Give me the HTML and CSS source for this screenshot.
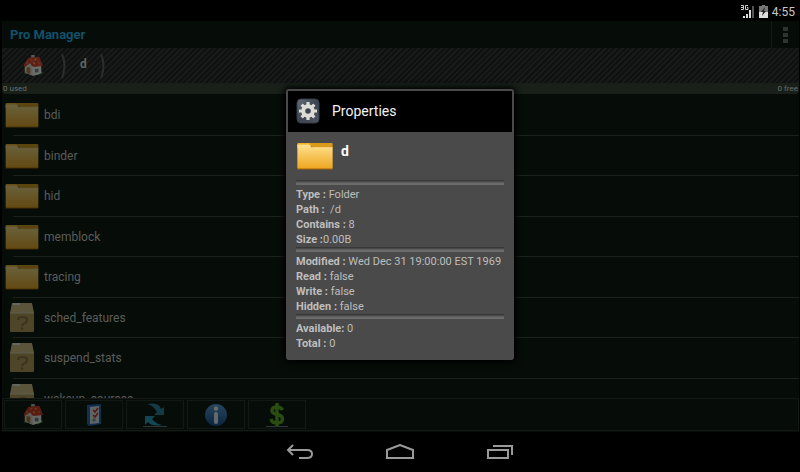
FILE: index.html
```
<!DOCTYPE html>
<html lang="en">

<head>
    <title>Pro Manager</title>
    <meta name="viewport" content="width=device-width, initial-scale=1" charset="UTF-8">
    <link rel="stylesheet" href="styles.css">
</head>

<body>
    <!-- shared icons -->
    <svg class="defs" width="0" height="0" aria-hidden="true">
        <defs>
            <linearGradient id="gold" x1="0" y1="0" x2="0" y2="1">
                <stop offset="0" stop-color="#ffe08a" />
                <stop offset="1" stop-color="#eda51f" />
            </linearGradient>
            <linearGradient id="blue" x1="0" y1="0" x2="0" y2="1">
                <stop offset="0" stop-color="#5b9cdc" />
                <stop offset="1" stop-color="#164a98" />
            </linearGradient>
            <linearGradient id="steel" x1="0" y1="0" x2="1" y2="1">
                <stop offset="0" stop-color="#66707c" />
                <stop offset="0.5" stop-color="#3b444f" />
                <stop offset="1" stop-color="#4d5662" />
            </linearGradient>
        </defs>
        <symbol id="folder" viewBox="0 0 36 27">
            <path d="M1 2q0-1 1-1h11l3 3h-3l2 2H1z" fill="#f2b42c" />
            <path d="M13 1h21q1 0 1 1v4H16z" fill="#d99a1c" />
            <path d="M1 3h11l3 2.500h20V25q0 1-1 1H2q-1 0-1-1z" fill="url(#gold)" />
            <path d="M1 3h11l3 2.500h20" fill="none" stroke="#ffe9a8" stroke-width="0.700" />
            <path d="M1 26h34" stroke="#a8640a" stroke-width="1" />
        </symbol>
        <symbol id="box" viewBox="0 0 28 32">
            <path d="M4 1h20l2 10H2z" fill="#d8c088" />
            <path d="M2 11h24v18q0 1-1 1H3q-1 0-1-1z" fill="#b99a5c" />
            <path d="M2 11h24" stroke="#e6d3a4" stroke-width="1" />
            <path d="M5 1h7v2H4.500z" fill="#efefef" />
            <path d="M10 18q0-3 4.500-3t4.500 3q0 2.500-3 3.500q-2 .8-2 2.500M14 25.500v2.500" fill="none" stroke="#8a7246" stroke-width="2.200" />
        </symbol>
        <symbol id="house" viewBox="0 0 24 26">
            <path d="M1 21l6-2 13-1 3 2-5 3z" fill="#3b9a35" />
            <path d="M10 1h4v6h-4z" fill="#b8bcc0" />
            <path d="M3 12l5-4 4 6v10l-9-4z" fill="#d9d4ca" />
            <path d="M11 13h10v8l-9 3z" fill="#f6f4ef" />
            <path d="M7 4l12-1 4 10-11 1-3-4-6 4-1-2z" fill="#d3331f" />
            <path d="M9 6h2v1H9zM14 5h2v2h-2zM12 9h2v2h-2zM18 9h1v2h-1zM5 9h1v2H5z" fill="#f0a13a" />
            <path d="M5 14l4 1v7l-4-2z" fill="#b56b28" />
            <path d="M14 16h4v4h-4z" fill="#6f7d8c" />
        </symbol>
    </svg>

    <header class="status">
        <svg width="14" height="14" viewBox="0 0 14 14" aria-hidden="true">
            <path d="M0 .5h2.500v4H0M0 2.500h2.500M7 .5H4.500v4H7V2.500H6" fill="none" stroke="#ccc" />
            <path d="M2 13v-2h2v2zM5 13V9h2v4zM8 13V5h2v8z" fill="#ddd" />
            <path d="M11 13V1h2v12z" fill="#555" />
        </svg>
        <svg width="9" height="13" viewBox="0 0 9 13" aria-hidden="true">
            <path d="M3 0h3v1h3v12H0V1h3z" fill="#777" />
            <path d="M0 7h9v6H0z" fill="#ddd" />
            <path d="M6 2L2 7h2l-1 4 4-5H5z" fill="#222" />
        </svg>
        <span>4:55</span>
    </header>

    <main class="app">
        <div class="titlebar">
            <h1>Pro Manager</h1>
            <button class="menu" type="button" aria-label="More options"><i></i><i></i><i></i></button>
        </div>

        <nav class="path">
            <a class="path-home" href="#" aria-label="Home"><svg class="dim" width="22" height="24"><use href="#house" /></svg></a>
            <svg class="chevron" width="8" height="26" viewBox="0 0 8 26"><path d="M2 1q5 12 0 24" /></svg>
            <a class="path-dir" href="#">d</a>
            <svg class="chevron" width="8" height="26" viewBox="0 0 8 26"><path d="M2 1q5 12 0 24" /></svg>
        </nav>

        <div class="usage"><span>0 used</span><span>0 free</span></div>

        <ul class="files">
            <li><a href="#"><svg class="dim" width="36" height="26"><use href="#folder" /></svg>bdi</a></li>
            <li><a href="#"><svg class="dim" width="36" height="26"><use href="#folder" /></svg>binder</a></li>
            <li><a href="#"><svg class="dim" width="36" height="26"><use href="#folder" /></svg>hid</a></li>
            <li><a href="#"><svg class="dim" width="36" height="26"><use href="#folder" /></svg>memblock</a></li>
            <li><a href="#"><svg class="dim" width="36" height="26"><use href="#folder" /></svg>tracing</a></li>
            <li><a href="#"><svg class="dim" width="36" height="32"><use href="#box" /></svg>sched_features</a></li>
            <li><a href="#"><svg class="dim" width="36" height="32"><use href="#box" /></svg>suspend_stats</a></li>
            <li><a href="#"><svg class="dim" width="36" height="32"><use href="#box" /></svg>wakeup_sources</a></li>
        </ul>

        <div class="toolbar">
            <button type="button" aria-label="Home"><svg class="dim" width="22" height="24"><use href="#house" /></svg></button>
            <button type="button" aria-label="Select">
                <svg class="dim" width="24" height="24" viewBox="0 0 24 24">
                    <path d="M5 2l13-1q1 0 1 1v19l-12 2-2-2z" fill="#1f67b8" />
                    <path d="M8 4l9-1v17l-9 1z" fill="#e4ebf2" />
                    <path d="M11 7l2 2 3-4M11 12l2 2 3-4" fill="none" stroke="#d02c20" stroke-width="1.600" />
                    <path d="M11 16h2v2h-2z" fill="none" stroke="#6a7f96" />
                </svg>
            </button>
            <button type="button" aria-label="Refresh">
                <svg class="dim" width="26" height="26" viewBox="0 0 26 26">
                    <path d="M5 2Q17 0 19 7l3-2v8H12l3-3Q12 4 5 2z" fill="#2b7fa8" />
                    <path d="M3 14h10l-3 3q4 5 10 6-10 2-14-3l-3 3z" fill="#2b9fc8" />
                    <path d="M1 24.500h24" stroke="#70797c" />
                </svg>
            </button>
            <button type="button" aria-label="Info">
                <svg class="dim" width="24" height="24" viewBox="0 0 24 24">
                    <circle cx="12" cy="12" r="11" fill="url(#blue)" />
                    <path d="M12 11v8" stroke="#f2f6fa" stroke-width="4" stroke-linecap="round" />
                    <circle cx="12" cy="5.500" r="2.200" fill="#f2f6fa" />
                </svg>
            </button>
            <button type="button" aria-label="Donate">
                <svg class="dim" width="24" height="26" viewBox="0 0 24 26">
                    <path d="M1 24.500h22" stroke="#70797c" />
                    <path d="M17.500 8Q16 5 12 5q-5 0-5 3.500 0 3 5 4 5.500 1 5.500 4.500 0 4-5.500 4-5 0-6-4M12 1v23" fill="none" stroke="#5fae1c" stroke-width="3.400" />
                </svg>
            </button>
        </div>
    </main>

    <footer class="keys">
        <button type="button" aria-label="Back">
            <svg width="28" height="16" viewBox="0 0 28 16"><path d="M7 1L2 6l5 5M2 6h19q5 0 5 4t-5 4h-8" /></svg>
        </button>
        <button type="button" aria-label="Home">
            <svg width="28" height="16" viewBox="0 0 28 16"><path d="M1 14V6l13-5 13 5v8z" /></svg>
        </button>
        <button type="button" aria-label="Recent apps">
            <svg width="28" height="16" viewBox="0 0 28 16"><path d="M2 6h20v8H2zM7 2h19v9" /></svg>
        </button>
    </footer>

    <!-- properties window -->
    <div class="overlay">
        <section class="dialog" role="dialog" aria-labelledby="dialogTitle">
            <header class="dialog-head">
                <svg width="24" height="26" viewBox="0 0 24 26" aria-hidden="true">
                    <rect x="1" y="1" width="22" height="24" rx="4" fill="url(#steel)" stroke="#343c46" />
                    <circle cx="12" cy="13" r="4.800" fill="none" stroke="#dedcd8" stroke-width="4" />
                    <path d="M12 4v4M12 18v4M3 13h4M17 13h4M5.600 6.600l3 3M15.400 16.400l3 3M18.400 6.600l-3 3M8.600 16.400l-3 3" stroke="#dedcd8" stroke-width="3.200" />
                </svg>
                <h2 id="dialogTitle">Properties</h2>
            </header>
            <div class="dialog-body">
                <div class="item">
                    <svg width="38" height="28" aria-hidden="true"><use href="#folder" /></svg>
                    <h3>d</h3>
                </div>
                <hr>
                <p><b>Type :</b> Folder</p>
                <p><b>Path :</b>  /d</p>
                <p><b>Contains :</b> 8</p>
                <p><b>Size :</b>0.00B</p>
                <hr>
                <p><b>Modified :</b> Wed Dec 31 19:00:00 EST 1969</p>
                <p><b>Read :</b> false</p>
                <p><b>Write :</b> false</p>
                <p><b>Hidden :</b> false</p>
                <hr>
                <p><b>Available:</b> 0</p>
                <p><b>Total :</b> 0</p>
            </div>
        </section>
    </div>
</body>

</html>
```
FILE: styles.css
```
* {
    box-sizing: border-box;
}

body {
    margin: 0;
    height: 100vh;
    display: flex;
    flex-direction: column;
    overflow: hidden;
    background-color: #000000;
    font-family: Roboto, "Noto Sans", sans-serif;
}

h1, h2, h3, p, ul {
    margin: 0;
    padding: 0;
}

a {
    color: inherit;
    text-decoration: none;
}

button {
    padding: 0;
    border: 0;
    background: none;
}

svg {
    display: block;
    flex: none;
}

.defs {
    position: absolute;
}

.dim {
    opacity: 0.4;
}

/* status bar */
.status {
    display: flex;
    flex: none;
    align-items: center;
    justify-content: flex-end;
    gap: 4px;
    height: 21px;
    padding: 2px 5px 0 0;
    color: #c8c8c8;
    font-size: 12px;
    line-height: 16px;
}

.app {
    flex: 1;
    min-height: 0;
    display: flex;
    flex-direction: column;
    margin: 0 1px 0 2px;
    background-color: #060c08;
}

.titlebar {
    display: flex;
    flex: none;
    align-items: center;
    justify-content: space-between;
    height: 27px;
    padding-left: 8px;
}

.titlebar h1 {
    color: #13506a;
    font-size: 13px;
}

.menu {
    display: flex;
    flex-direction: column;
    align-items: center;
    justify-content: center;
    gap: 2px;
    width: 28px;
    height: 27px;
    border-left: 1px solid #151b17;
}

.menu i {
    width: 5px;
    height: 4px;
    background-color: #303431;
}

/* folder path */
.path {
    display: flex;
    flex: none;
    align-items: center;
    height: 35px;
    padding-left: 20px;
    background: repeating-linear-gradient(135deg, #0e110f 0 2px, #171a18 2px 4px);
}

.path-home {
    margin-right: 16px;
}

.path-dir {
    width: 31px;
    padding-bottom: 4px;
    color: #626462;
    font-size: 12px;
    font-weight: bold;
    text-align: center;
}

.chevron {
    fill: none;
    stroke: #2b2f2c;
    stroke-width: 2;
}

.usage {
    display: flex;
    flex: none;
    justify-content: space-between;
    padding: 0 1px;
    border-radius: 0 0 4px 4px;
    background-color: #182019;
    color: #6a6e6a;
    font-size: 8px;
    line-height: 11px;
}

/* file list */
.files {
    flex: 1;
    min-height: 0;
    overflow: hidden;
    padding-top: 1px;
    list-style: none;
}

.files li {
    height: 40px;
    padding-left: 2px;
    background: linear-gradient(#1b211d, #1b211d) 11px 100% / 100% 1px no-repeat;
}

.files li:nth-child(odd) {
    height: 41px;
}

.files a {
    display: flex;
    align-items: center;
    gap: 4px;
    height: 39px;
    color: #5a5d5a;
    font-size: 12px;
}

.toolbar {
    display: flex;
    flex: none;
    gap: 3px;
    margin-bottom: 1px;
    padding: 1px;
    border: 1px solid #141916;
}

.toolbar button {
    display: flex;
    align-items: center;
    justify-content: center;
    width: 58px;
    height: 29px;
    border: 1px solid #121815;
}

/* system keys */
.keys {
    display: flex;
    flex: none;
    align-items: center;
    justify-content: center;
    gap: 72px;
    height: 40px;
}

.keys path {
    fill: none;
    stroke: #9a9a9a;
    stroke-width: 2;
}

/* dialog */
.overlay {
    position: absolute;
    inset: 0;
    display: flex;
    align-items: center;
    justify-content: center;
    padding-bottom: 24px;
}

.dialog {
    width: 228px;
    border: 2px solid #4a4a4a;
    border-radius: 3px;
    background-color: #4a4a4a;
    box-shadow: 0 0 6px 2px #000000;
}

.dialog-head {
    display: flex;
    align-items: center;
    gap: 12px;
    height: 41px;
    padding-left: 8px;
    background-color: #000000;
    color: #f4f4f4;
}

.dialog-head h2 {
    font-size: 14px;
    font-weight: normal;
}

.dialog-body {
    padding: 0 8px 7px;
    color: #bebebe;
    font-size: 11px;
    line-height: 15px;
}

.dialog-body p {
    white-space: pre;
}

.item {
    display: flex;
    gap: 7px;
    height: 48px;
    padding-top: 10px;
}

.item h3 {
    color: #ffffff;
    font-size: 14px;
    line-height: 18px;
}

.dialog-body hr {
    height: 7px;
    margin: 0;
    border: 0;
    background: linear-gradient(#383838 0 1px, #4a4a4a 1px 2px, #5c5c5c 2px 3px, #6c6c6c 3px 5px, #4a4a4a 5px);
}
```
